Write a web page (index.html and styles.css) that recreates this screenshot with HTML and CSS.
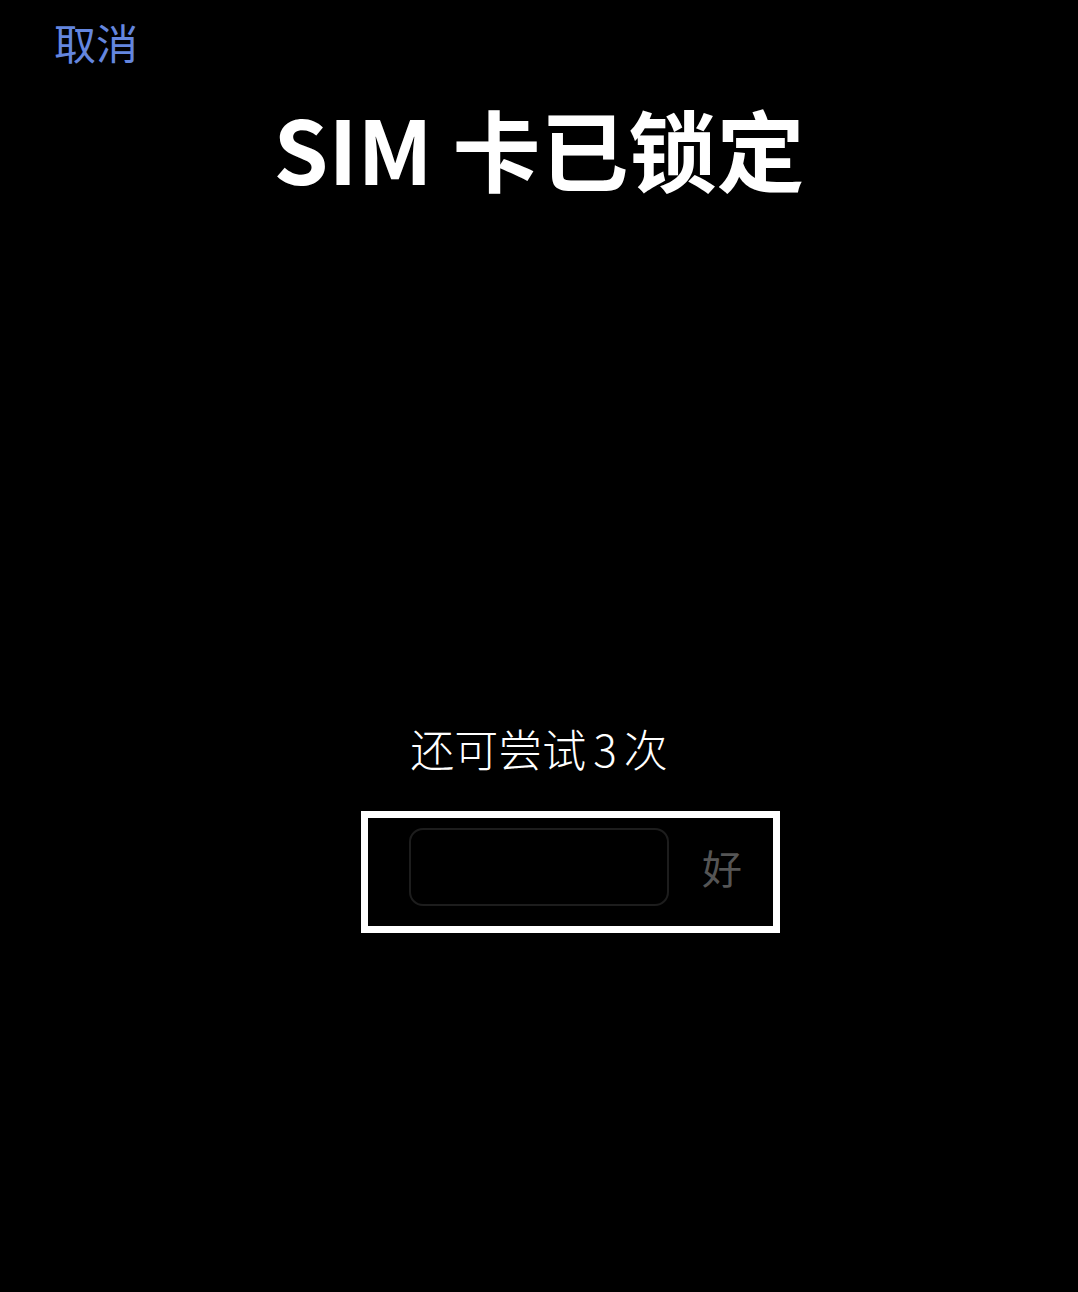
FILE: index.html
```html
<!DOCTYPE html>
<html lang="zh-CN">
<head>
<meta charset="utf-8">
<title>SIM 卡已锁定</title>
<link rel="stylesheet" href="styles.css">
</head>
<body>
<div class="screen">
  <div class="topbar"><span class="cancel">取消</span></div>
  <h1 class="title">SIM 卡已锁定</h1>
  <div class="spacer"></div>
  <p class="hint">还可尝试<span class="num">3</span>次</p>
  <div class="highlight">
    <div class="pin-field"></div>
    <span class="ok">好</span>
  </div>
</div>
</body>
</html>
```
FILE: styles.css
```css
html, body {
  margin: 0;
  padding: 0;
  background: #000;
}
body {
  width: 1078px;
  height: 1292px;
  overflow: hidden;
  font-family: "Noto Sans CJK SC", "Noto Sans", sans-serif;
}
.screen {
  display: flex;
  flex-direction: column;
  align-items: center;
  height: 1292px;
}
.topbar {
  align-self: stretch;
  padding: 21px 0 0 54px;
  height: 42px;
}
.cancel {
  display: block;
  font-size: 42px;
  line-height: 42px;
  color: #6486df;
}
.title {
  margin: 40px 0 0 0;
  font-size: 88px;
  line-height: 88px;
  font-weight: 700;
  color: #fff;
  letter-spacing: 0;
}
.spacer {
  height: 535px;
}
.hint {
  margin: 0;
  font-size: 44px;
  line-height: 44px;
  color: #fff;
  font-weight: 300;
}
.num {
  margin: 0 7px;
}
.highlight {
  margin: 41px 0 0 63px;
  width: 405px;
  height: 108px;
  border: 7px solid #fff;
  display: flex;
  align-items: flex-start;
  box-sizing: content-box;
}
.pin-field {
  margin: 10px 0 0 41px;
  width: 256px;
  height: 74px;
  border: 2px solid #1d1d1d;
  border-radius: 14px;
}
.ok {
  margin: 10px 0 0 33px;
  font-size: 40px;
  line-height: 78px;
  color: #555;
}
```
